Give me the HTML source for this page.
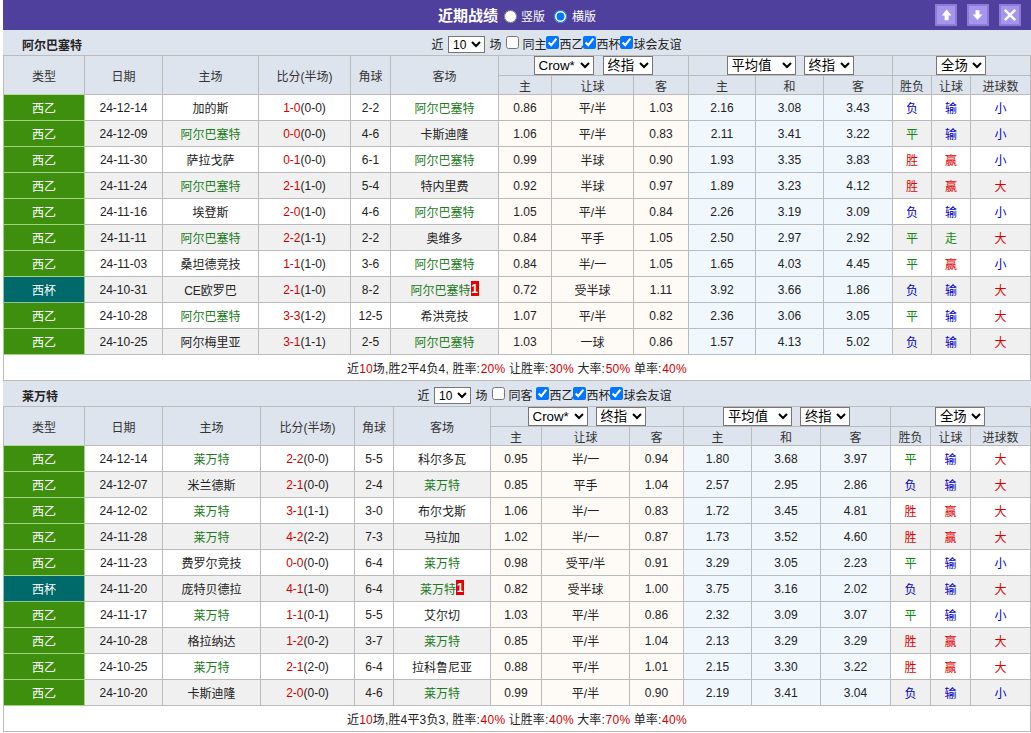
<!DOCTYPE html>
<html lang="zh-CN"><head><meta charset="utf-8"><title>近期战绩</title>
<style>
html,body{margin:0;padding:0;background:#fff;}
body{width:1031px;height:733px;overflow:hidden;font-family:"Liberation Sans","Noto Sans CJK SC",sans-serif;font-size:12px;color:#222;}
.top{position:absolute;left:3px;top:0;width:1028px;height:30px;background:#4F409E;}
.top{color:#fff;}
.ttl{position:absolute;left:435px;top:0;line-height:32px;font-size:15px;white-space:nowrap;}
.top input{position:absolute;margin:0;width:13px;height:13px;top:10px;}
.top span.l1,.top span.l2{position:absolute;top:0;line-height:34px;font-size:12px;white-space:nowrap;}
.r1{left:501px}.l1{left:518px}.r2{left:551px}.l2{left:569px}
.bt{position:absolute;top:4px;width:18px;height:18px;background:#A595EC;border:2px solid #8C7CD6;}
.b1{left:932px}.b2{left:964px}.b3{left:996px}
.bt svg{display:block}
.wrap{position:absolute;left:3px;top:30px;width:1028px;}
.tbar{height:25px;background:#DEE4EE;position:relative;line-height:25px;}
.tn{position:absolute;left:19px;top:4px;font-size:12px;}
.flt{position:absolute;left:0;top:0;height:25px;width:1028px;font-size:12px;}
.flt span{position:absolute;top:0;line-height:31px;white-space:nowrap;}
.flt input{position:absolute;top:6px;margin:0;width:13px;height:13px;}
.flt select{position:absolute;top:6px;}
select{font-family:"Liberation Sans","Noto Sans CJK SC",sans-serif;font-size:13.33px;height:18px;padding:0;margin:0;border:1px solid #767676;border-radius:0;background-color:#fff;color:#000;}
.s10{width:37px;font-size:12px;height:17px}
.sa{width:60px}.sb{width:50px;margin-left:9px}.sc{width:69px}.sc+.sb{margin-left:8px}.sd{width:50px}
.sw{height:19px;display:flex;justify-content:center;align-items:flex-start}
.sw{margin-left:-1px}
table{border-collapse:separate;border-spacing:0;table-layout:fixed;width:1028px;}
th,td{box-sizing:border-box;border:0 solid #BBB;border-right-width:1px;border-bottom-width:1px;text-align:center;padding:0;font-weight:normal;white-space:nowrap;overflow:hidden;}
th:first-child,td:first-child{border-left-width:1px;}
tr.h1 th{border-top-width:1px;}
tr.h2 th:first-child{border-left-width:0;}
th{background:#DEE4EE;color:#333;}
tr.h1{height:21px}tr.h2{height:19px}
td{height:26px;background:#fff;}
tr.alt td{background:#F0F0F0;}
td.hc, tr.alt td.hc{background:#FEFAF6;}
td.od, tr.alt td.od{background:#F0F7FD;}
td.lg, tr.alt td.lg{background:#3F8F0F;color:#fff;border-color:#A2D384;}
td.cup, tr.alt td.cup{background:#006A6A;color:#fff;border-color:#8CC39A;}
tr.sum td{height:26px;background:#fff;}
.tg{color:#1B7B1B}
.r{color:#D00000}.b{color:#0000C0}.g{color:#118811}
td.r{color:#E00000}td.b{color:#0000C8}td.g{color:#118811}
.rc{display:inline-block;background:#E80000;color:#fff;font-style:normal;font-weight:bold;font-size:12px;line-height:17px;width:8px;height:15px;margin:-4px 0;vertical-align:-2px;position:relative;top:-4px;}
.gap{height:0}
tr.h1 th:first-child{border-bottom-color:#B4D8A0;}
.sum .a{letter-spacing:.15px}.sum .c{letter-spacing:.9px}.sum .p{letter-spacing:.3px}
.t2 .sa+.sb{margin-left:8px}
.sw select{height:19px}

</style></head><body>
<div class="top"><b class="ttl">近期战绩</b><input type="radio" name="v" class="r1"><span class="l1">竖版</span><input type="radio" name="v" checked class="r2"><span class="l2">横版</span>
<span class="bt b1"><svg width="18" height="18" viewBox="0 0 18 18"><path d="M9.7 3.6 L14.4 9.5 L11.6 9.5 L11.6 14.2 L7.6 14.2 L7.6 9.5 L4.8 9.5 Z" fill="#fff"/></svg></span><span class="bt b2"><svg width="18" height="18" viewBox="0 0 18 18"><path d="M8.5 14 L13.4 8.4 L10.5 8.4 L10.5 4.2 L6.5 4.2 L6.5 8.4 L3.6 8.4 Z" fill="#fff"/></svg></span><span class="bt b3"><svg width="18" height="18" viewBox="0 0 18 18"><path d="M3.8 3.8 L14.2 14.2 M14.2 3.8 L3.8 14.2" stroke="#fff" stroke-width="2.4" fill="none"/></svg></span></div>
<div class="wrap">
<div class="tbar"><b class="tn">阿尔巴塞特</b><div class="flt"><span style="left:428.5px">近</span><select class="s10" style="left:445px"><option>10</option></select><span style="left:486.5px">场</span><input type="checkbox" style="left:503px"><span style="left:519.5px">同主</span><input type="checkbox" checked style="left:543px"><span style="left:556.5px">西乙</span><input type="checkbox" checked style="left:580px"><span style="left:593.5px">西杯</span><input type="checkbox" checked style="left:617px"><span style="left:630.5px">球会友谊</span></div></div>
<table cellspacing="0" cellpadding="0"><colgroup><col style="width:82px"><col style="width:78px"><col style="width:96px"><col style="width:92px"><col style="width:40px"><col style="width:108px"><col style="width:53px"><col style="width:82px"><col style="width:55px"><col style="width:67px"><col style="width:68px"><col style="width:69px"><col style="width:39px"><col style="width:39px"><col style="width:60px"></colgroup>
<tr class="h1"><th rowspan="2">类型</th><th rowspan="2">日期</th><th rowspan="2">主场</th><th rowspan="2">比分(半场)</th><th rowspan="2">角球</th><th rowspan="2">客场</th><th colspan="3"><div class="sw"><select class="sa"><option>Crow*</option></select><select class="sb"><option>终指</option></select></div></th><th colspan="3"><div class="sw"><select class="sc"><option>平均值</option></select><select class="sb"><option>终指</option></select></div></th><th colspan="3"><div class="sw sw3"><select class="sd"><option>全场</option></select></div></th></tr>
<tr class="h2"><th>主</th><th>让球</th><th>客</th><th>主</th><th>和</th><th>客</th><th>胜负</th><th>让球</th><th>进球数</th></tr>
<tr class=""><td class="lg">西乙</td><td>24-12-14</td><td>加的斯</td><td><span class="r">1-0</span>(0-0)</td><td>2-2</td><td><span class="tg">阿尔巴塞特</span></td><td class="hc">0.86</td><td class="hc">平/半</td><td class="hc">1.03</td><td class="od">2.16</td><td class="od">3.08</td><td class="od">3.43</td><td class="w b">负</td><td class="w b">输</td><td class="w b">小</td></tr>
<tr class="alt"><td class="lg">西乙</td><td>24-12-09</td><td><span class="tg">阿尔巴塞特</span></td><td><span class="r">0-0</span>(0-0)</td><td>4-6</td><td>卡斯迪隆</td><td class="hc">1.06</td><td class="hc">平/半</td><td class="hc">0.83</td><td class="od">2.11</td><td class="od">3.41</td><td class="od">3.22</td><td class="w g">平</td><td class="w b">输</td><td class="w b">小</td></tr>
<tr class=""><td class="lg">西乙</td><td>24-11-30</td><td>萨拉戈萨</td><td><span class="r">0-1</span>(0-0)</td><td>6-1</td><td><span class="tg">阿尔巴塞特</span></td><td class="hc">0.99</td><td class="hc">半球</td><td class="hc">0.90</td><td class="od">1.93</td><td class="od">3.35</td><td class="od">3.83</td><td class="w r">胜</td><td class="w r">赢</td><td class="w b">小</td></tr>
<tr class="alt"><td class="lg">西乙</td><td>24-11-24</td><td><span class="tg">阿尔巴塞特</span></td><td><span class="r">2-1</span>(1-0)</td><td>5-4</td><td>特内里费</td><td class="hc">0.92</td><td class="hc">半球</td><td class="hc">0.97</td><td class="od">1.89</td><td class="od">3.23</td><td class="od">4.12</td><td class="w r">胜</td><td class="w r">赢</td><td class="w r">大</td></tr>
<tr class=""><td class="lg">西乙</td><td>24-11-16</td><td>埃登斯</td><td><span class="r">2-0</span>(1-0)</td><td>4-6</td><td><span class="tg">阿尔巴塞特</span></td><td class="hc">1.05</td><td class="hc">平/半</td><td class="hc">0.84</td><td class="od">2.26</td><td class="od">3.19</td><td class="od">3.09</td><td class="w b">负</td><td class="w b">输</td><td class="w b">小</td></tr>
<tr class="alt"><td class="lg">西乙</td><td>24-11-11</td><td><span class="tg">阿尔巴塞特</span></td><td><span class="r">2-2</span>(1-1)</td><td>2-2</td><td>奥维多</td><td class="hc">0.84</td><td class="hc">平手</td><td class="hc">1.05</td><td class="od">2.50</td><td class="od">2.97</td><td class="od">2.92</td><td class="w g">平</td><td class="w g">走</td><td class="w r">大</td></tr>
<tr class=""><td class="lg">西乙</td><td>24-11-03</td><td>桑坦德竞技</td><td><span class="r">1-1</span>(1-0)</td><td>3-6</td><td><span class="tg">阿尔巴塞特</span></td><td class="hc">0.84</td><td class="hc">半/一</td><td class="hc">1.05</td><td class="od">1.65</td><td class="od">4.03</td><td class="od">4.45</td><td class="w g">平</td><td class="w r">赢</td><td class="w b">小</td></tr>
<tr class="alt"><td class="cup">西杯</td><td>24-10-31</td><td>CE欧罗巴</td><td><span class="r">2-1</span>(1-0)</td><td>8-2</td><td><span class="tg">阿尔巴塞特</span><i class="rc">1</i></td><td class="hc">0.72</td><td class="hc">受半球</td><td class="hc">1.11</td><td class="od">3.92</td><td class="od">3.66</td><td class="od">1.86</td><td class="w b">负</td><td class="w b">输</td><td class="w r">大</td></tr>
<tr class=""><td class="lg">西乙</td><td>24-10-28</td><td><span class="tg">阿尔巴塞特</span></td><td><span class="r">3-3</span>(1-2)</td><td>12-5</td><td>希洪竞技</td><td class="hc">1.07</td><td class="hc">平/半</td><td class="hc">0.82</td><td class="od">2.36</td><td class="od">3.06</td><td class="od">3.05</td><td class="w g">平</td><td class="w b">输</td><td class="w r">大</td></tr>
<tr class="alt"><td class="lg">西乙</td><td>24-10-25</td><td>阿尔梅里亚</td><td><span class="r">3-1</span>(1-1)</td><td>2-5</td><td><span class="tg">阿尔巴塞特</span></td><td class="hc">1.03</td><td class="hc">一球</td><td class="hc">0.86</td><td class="od">1.57</td><td class="od">4.13</td><td class="od">5.02</td><td class="w b">负</td><td class="w b">输</td><td class="w r">大</td></tr>
<tr class="sum"><td colspan="15"><span class="a">近<span class="r">10</span>场,胜2平4负4, </span>胜率<span class="c">:</span><span class="r p">20%</span> 让胜率<span class="c">:</span><span class="r p">30%</span> 大率<span class="c">:</span><span class="r p">50%</span> 单率<span class="c">:</span><span class="r p">40%</span></td></tr>
</table>
<div class="gap"></div>
<div class="tbar"><b class="tn">莱万特</b><div class="flt"><span style="left:414.5px">近</span><select class="s10" style="left:431px"><option>10</option></select><span style="left:472.5px">场</span><input type="checkbox" style="left:489px"><span style="left:505.5px">同客</span><input type="checkbox" checked style="left:533px"><span style="left:546.5px">西乙</span><input type="checkbox" checked style="left:570px"><span style="left:583.5px">西杯</span><input type="checkbox" checked style="left:607px"><span style="left:620.5px">球会友谊</span></div></div>
<table cellspacing="0" cellpadding="0" class="t2"><colgroup><col style="width:82px"><col style="width:78px"><col style="width:98px"><col style="width:94px"><col style="width:39px"><col style="width:97px"><col style="width:51px"><col style="width:88px"><col style="width:54px"><col style="width:68px"><col style="width:69px"><col style="width:70px"><col style="width:40px"><col style="width:40px"><col style="width:60px"></colgroup>
<tr class="h1"><th rowspan="2">类型</th><th rowspan="2">日期</th><th rowspan="2">主场</th><th rowspan="2">比分(半场)</th><th rowspan="2">角球</th><th rowspan="2">客场</th><th colspan="3"><div class="sw"><select class="sa"><option>Crow*</option></select><select class="sb"><option>终指</option></select></div></th><th colspan="3"><div class="sw"><select class="sc"><option>平均值</option></select><select class="sb"><option>终指</option></select></div></th><th colspan="3"><div class="sw sw3"><select class="sd"><option>全场</option></select></div></th></tr>
<tr class="h2"><th>主</th><th>让球</th><th>客</th><th>主</th><th>和</th><th>客</th><th>胜负</th><th>让球</th><th>进球数</th></tr>
<tr class=""><td class="lg">西乙</td><td>24-12-14</td><td><span class="tg">莱万特</span></td><td><span class="r">2-2</span>(0-0)</td><td>5-5</td><td>科尔多瓦</td><td class="hc">0.95</td><td class="hc">半/一</td><td class="hc">0.94</td><td class="od">1.80</td><td class="od">3.68</td><td class="od">3.97</td><td class="w g">平</td><td class="w b">输</td><td class="w r">大</td></tr>
<tr class="alt"><td class="lg">西乙</td><td>24-12-07</td><td>米兰德斯</td><td><span class="r">2-1</span>(0-0)</td><td>2-4</td><td><span class="tg">莱万特</span></td><td class="hc">0.85</td><td class="hc">平手</td><td class="hc">1.04</td><td class="od">2.57</td><td class="od">2.95</td><td class="od">2.86</td><td class="w b">负</td><td class="w b">输</td><td class="w r">大</td></tr>
<tr class=""><td class="lg">西乙</td><td>24-12-02</td><td><span class="tg">莱万特</span></td><td><span class="r">3-1</span>(1-1)</td><td>3-0</td><td>布尔戈斯</td><td class="hc">1.06</td><td class="hc">半/一</td><td class="hc">0.83</td><td class="od">1.72</td><td class="od">3.45</td><td class="od">4.81</td><td class="w r">胜</td><td class="w r">赢</td><td class="w r">大</td></tr>
<tr class="alt"><td class="lg">西乙</td><td>24-11-28</td><td><span class="tg">莱万特</span></td><td><span class="r">4-2</span>(2-2)</td><td>7-3</td><td>马拉加</td><td class="hc">1.02</td><td class="hc">半/一</td><td class="hc">0.87</td><td class="od">1.73</td><td class="od">3.52</td><td class="od">4.60</td><td class="w r">胜</td><td class="w r">赢</td><td class="w r">大</td></tr>
<tr class=""><td class="lg">西乙</td><td>24-11-23</td><td>费罗尔竞技</td><td><span class="r">0-0</span>(0-0)</td><td>6-4</td><td><span class="tg">莱万特</span></td><td class="hc">0.98</td><td class="hc">受平/半</td><td class="hc">0.91</td><td class="od">3.29</td><td class="od">3.05</td><td class="od">2.23</td><td class="w g">平</td><td class="w b">输</td><td class="w b">小</td></tr>
<tr class="alt"><td class="cup">西杯</td><td>24-11-20</td><td>庞特贝德拉</td><td><span class="r">4-1</span>(1-0)</td><td>6-4</td><td><span class="tg">莱万特</span><i class="rc">1</i></td><td class="hc">0.82</td><td class="hc">受半球</td><td class="hc">1.00</td><td class="od">3.75</td><td class="od">3.16</td><td class="od">2.02</td><td class="w b">负</td><td class="w b">输</td><td class="w r">大</td></tr>
<tr class=""><td class="lg">西乙</td><td>24-11-17</td><td><span class="tg">莱万特</span></td><td><span class="r">1-1</span>(0-1)</td><td>5-5</td><td>艾尔切</td><td class="hc">1.03</td><td class="hc">平/半</td><td class="hc">0.86</td><td class="od">2.32</td><td class="od">3.09</td><td class="od">3.07</td><td class="w g">平</td><td class="w b">输</td><td class="w b">小</td></tr>
<tr class="alt"><td class="lg">西乙</td><td>24-10-28</td><td>格拉纳达</td><td><span class="r">1-2</span>(0-2)</td><td>3-7</td><td><span class="tg">莱万特</span></td><td class="hc">0.85</td><td class="hc">平/半</td><td class="hc">1.04</td><td class="od">2.13</td><td class="od">3.29</td><td class="od">3.29</td><td class="w r">胜</td><td class="w r">赢</td><td class="w r">大</td></tr>
<tr class=""><td class="lg">西乙</td><td>24-10-25</td><td><span class="tg">莱万特</span></td><td><span class="r">2-1</span>(2-0)</td><td>6-4</td><td>拉科鲁尼亚</td><td class="hc">0.88</td><td class="hc">平/半</td><td class="hc">1.01</td><td class="od">2.15</td><td class="od">3.30</td><td class="od">3.22</td><td class="w r">胜</td><td class="w r">赢</td><td class="w r">大</td></tr>
<tr class="alt"><td class="lg">西乙</td><td>24-10-20</td><td>卡斯迪隆</td><td><span class="r">2-0</span>(0-0)</td><td>4-6</td><td><span class="tg">莱万特</span></td><td class="hc">0.99</td><td class="hc">平/半</td><td class="hc">0.90</td><td class="od">2.19</td><td class="od">3.41</td><td class="od">3.04</td><td class="w b">负</td><td class="w b">输</td><td class="w b">小</td></tr>
<tr class="sum"><td colspan="15"><span class="a">近<span class="r">10</span>场,胜4平3负3, </span>胜率<span class="c">:</span><span class="r p">40%</span> 让胜率<span class="c">:</span><span class="r p">40%</span> 大率<span class="c">:</span><span class="r p">70%</span> 单率<span class="c">:</span><span class="r p">40%</span></td></tr>
</table>
</div>
</body></html>
